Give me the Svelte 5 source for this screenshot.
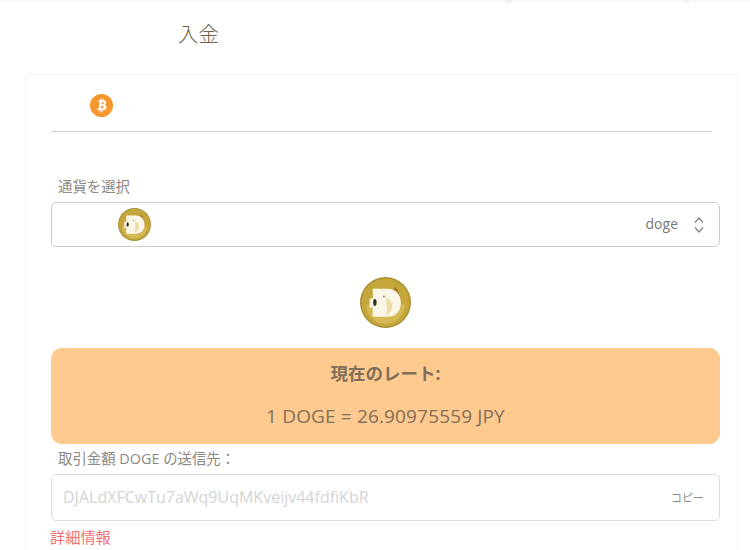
<script lang="ts">
  let coin = "doge";
  let rate = "1 DOGE = 26.90975559 JPY";
  let address = "DJALdXFCwTu7aWq9UqMKveijv44fdfiKbR";
</script>

{#snippet dogeIcon(size)}
  <svg class="doge" width={size} height={size} viewBox="0 0 50 50" aria-hidden="true">
    <circle cx="25" cy="25" r="25" fill="#a89030" />
    <circle cx="25" cy="25" r="23.6" fill="#c4a63c" />
    <path d="M6 27a19 19 0 0 0 38 0z" fill="#d4b955" />
    <path d="M33 12.5l2-3 2.5 4 1 5-5-3z" fill="#a8772c" />
    <path d="M12.5 11.5H27C36 11.5 40 18 40 25.5 40 33 35.5 39 27 39H12.5V30H9.5V21H12.5Z" fill="#fbf7e8" />
    <path d="M25 21C29 21 31.5 24 31.5 28.5 31.5 33 29 36.5 25.5 37 27 32 26.5 26 25 21Z" fill="#efdca2" />
    <ellipse cx="14.6" cy="25" rx="1.7" ry="3.4" fill="#3a3020" />
    <circle cx="23.5" cy="19" r="0.9" fill="#8a7a58" />
  </svg>
{/snippet}

<main class="page">
  <div class="topbar">
    <span class="mark"></span>
    <span class="mark"></span>
  </div>
  <h1 class="title">入金</h1>

  <section class="card">
    <div class="tabs">
      <svg class="btc" width="23" height="23" viewBox="0 0 24 24" aria-hidden="true">
        <circle cx="12" cy="12" r="12" fill="#f6982f" />
        <path
          d="M9.3 6.6h4.2c1.9 0 3 .9 3 2.4 0 1.1-.6 1.9-1.6 2.2 1.3.3 2 1.2 2 2.5 0 1.8-1.3 2.9-3.4 2.9H8l.4-1.7h.8l1.2-6.9h-1.4zm2.9 1.7-.4 2.4h1.5c.9 0 1.4-.5 1.4-1.3 0-.7-.5-1.1-1.2-1.1zm-.7 3.9-.5 2.8h1.9c1 0 1.6-.6 1.6-1.5s-.6-1.3-1.5-1.3z"
          fill="#fff"
          stroke="#fff"
          stroke-width="0.5"
        />
        <path d="M11 5h1.2l-.3 1.7h-1.2zM13.3 5h1.2l-.3 1.7h-1.2zM10 17h1.2l-.3 2h-1.2zM12.3 17h1.2l-.3 2H12z" fill="#fff" />
      </svg>
    </div>

    <div class="body">
      <label class="field-label select-label" for="coin">通貨を選択</label>
      <div class="select" id="coin">
        {@render dogeIcon(33)}
        <span class="select-value">{coin}</span>
        <svg class="updown" width="12" height="18" viewBox="0 0 12 18" aria-hidden="true">
          <path d="M2 6.5 6 2l4 4.5M2 11.5 6 16l4-4.5" fill="none" stroke="#808080" stroke-width="1.2" />
        </svg>
      </div>

      <div class="coin-big">
        {@render dogeIcon(51)}
      </div>

      <div class="rate">
        <strong>現在のレート:</strong>
        <p>{rate}</p>
      </div>

      <div class="field-label send-label">取引金額 DOGE の送信先：</div>
      <div class="address">
        <span class="address-text">{address}</span>
        <span class="copy">コピー</span>
      </div>
      <a class="more" href="#more">詳細情報</a>
    </div>
  </section>
</main>

<style>
  :global(body) {
    margin: 0;
    background: #fff;
    overflow: hidden;
  }
  .page {
    width: 750px;
    height: 550px;
    overflow: hidden;
    font-family: "Open Sans", "Noto Sans CJK JP", sans-serif;
    color: #7d7364;
    background: #fff;
  }
  .topbar {
    display: flex;
    height: 3px;
    padding-left: 506px;
    background: #fafafa;
  }
  .mark {
    width: 6px;
    background: #f1f1f1;
  }
  .mark + .mark {
    margin-left: 172px;
  }
  .title {
    margin: 0;
    height: 71px;
    padding: 16px 0 0 178px;
    box-sizing: border-box;
    font: 300 20.5px/28px "Noto Sans CJK JP", sans-serif;
    color: #6f5f48;
  }
  .card {
    width: 713px;
    height: 500px;
    margin-left: 25px;
    box-sizing: border-box;
    border: 1px solid #f4f4f4;
    border-radius: 3px;
    padding: 0 17px 0 25px;
  }
  .tabs {
    width: 661px;
    height: 57px;
    box-sizing: border-box;
    padding: 19px 0 0 39px;
    border-bottom: 1px solid #cfcfcf;
  }
  .btc {
    display: block;
  }
  .field-label {
    font-size: 14.4px;
    line-height: 18px;
    color: #8c8882;
    padding-left: 7px;
  }
  .select-label {
    display: block;
    margin-top: 46px;
  }
  .select {
    display: flex;
    align-items: center;
    height: 45px;
    margin-top: 6px;
    box-sizing: border-box;
    border: 1px solid #cdcdcd;
    border-radius: 5px;
    padding: 0 14px 0 66px;
  }
  .doge {
    display: block;
    filter: blur(0.5px);
  }
  .select-value {
    margin-left: auto;
    margin-right: 15px;
    font-size: 14px;
    line-height: 18px;
    padding-bottom: 2px;
    color: #77777a;
  }
  .coin-big {
    display: flex;
    justify-content: center;
    margin-top: 30px;
  }
  .rate {
    margin-top: 20px;
    height: 96px;
    box-sizing: border-box;
    padding-top: 13px;
    border-radius: 11px;
    background: #ffca8f;
    text-align: center;
    color: #80705a;
  }
  .rate strong {
    display: block;
    font-size: 17.5px;
    line-height: 24px;
  }
  .rate p {
    margin: 19px 0 0;
    font-size: 19px;
    letter-spacing: 0.15px;
    line-height: 24px;
  }
  .send-label {
    margin-top: 5px;
    line-height: 20px;
  }
  .address {
    display: flex;
    align-items: center;
    justify-content: space-between;
    height: 47px;
    margin-top: 5px;
    box-sizing: border-box;
    border: 1px solid #dedede;
    border-radius: 5px;
    padding: 0 15px 2px 11px;
  }
  .address-text {
    font-size: 16px;
    color: #d4d4d4;
  }
  .copy {
    font-size: 11px;
    color: #8a8a8a;
  }
  .more {
    display: block;
    margin: 5px 0 0 -1px;
    font-size: 15.2px;
    line-height: 22px;
    color: #ee7272;
    text-decoration: none;
  }
</style>
